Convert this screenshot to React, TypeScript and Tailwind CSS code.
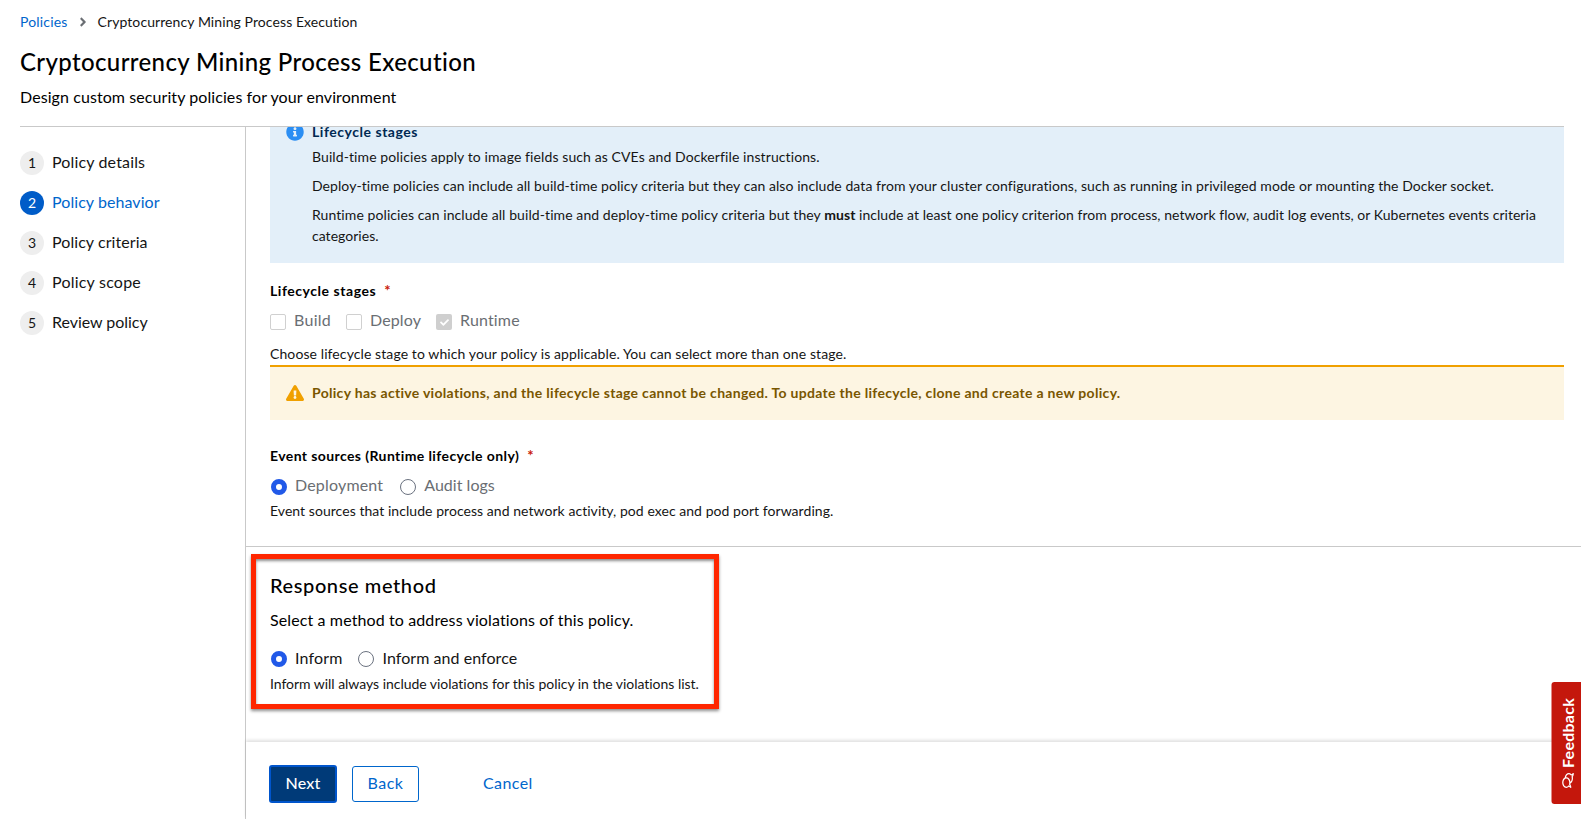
import type { ReactNode } from "react";
import { FaAngleRight, FaCheck, FaExclamationTriangle, FaInfoCircle, FaRegComments } from "react-icons/fa";

const steps = [
  { label: "Policy details", tracking: "tracking-[0.15px]" },
  { label: "Policy behavior", tracking: "tracking-[0.069px]" },
  { label: "Policy criteria", tracking: "tracking-[0.072px]" },
  { label: "Policy scope", tracking: "tracking-[0.22px]" },
  { label: "Review policy", tracking: "tracking-[-0.034px]" },
];

function FieldLabel({ children, className }: { children: ReactNode; className: string }) {
  return (
    <div className="flex h-[21px] gap-2 text-sm leading-[21px] font-bold text-black">
      <span className={className}>{children}</span>
      <span className="text-[15px] font-bold text-[#c9190b]">*</span>
    </div>
  );
}

function Checkbox({ label, checked, className }: { label: string; checked?: boolean; className: string }) {
  return (
    <label className="flex items-start text-base leading-6 text-[#6a6e73]">
      <span
        className={
          checked
            ? "mt-[6px] mr-2 flex size-4 items-center justify-center rounded-[2px] bg-[#cfcfcf] text-white"
            : "mt-[6px] mr-2 size-4 rounded-[2px] border border-[#d0d0d0] bg-white"
        }
      >
        {checked && <FaCheck className="size-[9px]" />}
      </span>
      <span className={className}>{label}</span>
    </label>
  );
}

function Radio({ label, checked, muted, className }: { label: string; checked?: boolean; muted?: boolean; className: string }) {
  return (
    <label
      className={
        muted
          ? "flex items-start pt-px text-base leading-6 text-[#6a6e73]"
          : "flex items-start text-base leading-6 text-[#151515]"
      }
    >
      <span
        className={
          checked
            ? "mt-[5px] mr-2 size-4 rounded-full border-[5px] border-[#2159e8] bg-white"
            : "mt-[5px] mr-2 size-4 rounded-full border border-[#6b7280] bg-white"
        }
      />
      <span className={muted ? `-mt-px ${className}` : className}>{label}</span>
    </label>
  );
}

export default function App() {
  return (
    <div className="relative flex h-[819px] w-full flex-col overflow-hidden bg-white font-['Lato',sans-serif] text-[#151515]">
      <header className="mr-[17px] ml-5 h-[127px] shrink-0 border-b border-[#c9c9c9] pt-[11px]">
        <nav className="flex h-[21px] items-center text-sm leading-[21px]">
          <a className="tracking-[0.18px] text-[#0066cc]">Policies</a>
          <FaAngleRight className="mr-[8px] ml-[8px] size-[14px] text-[#6a6e73]" />
          <span className="tracking-[0.085px]">Cryptocurrency Mining Process Execution</span>
        </nav>
        <h1 className="mt-[14px] h-[31px] text-2xl leading-[31px] font-medium tracking-[0.371px] text-black">Cryptocurrency Mining Process Execution</h1>
        <p className="mt-2 text-base leading-6 tracking-[0.08px] text-black">Design custom security policies for your environment</p>
      </header>

      <div className="flex min-h-0 flex-1">
        <ol className="flex w-[246px] shrink-0 flex-col gap-4 border-r border-[#c9c9c9] pt-6 pl-5">
          {steps.map((s, i) => (
            <li key={s.label} className={i === 1 ? "flex h-6 gap-2 text-[#0066cc]" : "flex h-6 gap-2"}>
              <span
                className={
                  i === 1
                    ? "flex size-6 justify-center rounded-full bg-[#005cc8] text-sm leading-6 text-white"
                    : "flex size-6 justify-center rounded-full bg-[#eeeeee] text-sm leading-6"
                }
              >
                {i + 1}
              </span>
              <span className={`text-base leading-[22px] ${s.tracking}`}>{s.label}</span>
            </li>
          ))}
        </ol>

        <div className="flex min-w-0 flex-1 flex-col">
          <main className="h-[615px] shrink-0 overflow-hidden">
            <section className="flow-root h-[419px] pr-[17px] pl-6">
              <div className="-mt-[24px] flex h-[160px] gap-2 border-t-2 border-[#2b9af3] bg-[#e3eff9] p-4 text-sm leading-[21px]">
                <FaInfoCircle className="mt-[2px] size-[18px] shrink-0 text-[#2b8ef3]" />
                <div>
                  <h4 className="font-bold tracking-[0.53px] text-[#002952]">Lifecycle stages</h4>
                  <div className="mt-1 flex flex-col gap-2">
                    <p className="tracking-[0.097px]">Build-time policies apply to image fields such as CVEs and Dockerfile instructions.</p>
                    <p className="tracking-[0.068px]">
                      Deploy-time policies can include all build-time policy criteria but they can also include data from your cluster configurations,
                      such as running in privileged mode or mounting the Docker socket.
                    </p>
                    <p className="tracking-[0.034px]">
                      <span className="tracking-[0.085px]">
                        Runtime policies can include all build-time and deploy-time policy criteria but they{" "}
                      </span>
                      <b className="font-bold">must</b> include at
                      least one policy criterion from process, network flow, audit log events, or Kubernetes events criteria categories.
                    </p>
                  </div>
                </div>
              </div>

              <div className="mt-[17px]">
                <FieldLabel className="tracking-[0.54px]">Lifecycle stages</FieldLabel>
                <div className="mt-[7px] flex h-6 gap-[15px]">
                  <Checkbox label="Build" className="tracking-[0.266px]" />
                  <Checkbox label="Deploy" className="tracking-[0.115px]" />
                  <Checkbox label="Runtime" checked className="tracking-[0.158px]" />
                </div>
                <p className="mt-[11px] mb-px h-[21px] text-sm leading-[21px] tracking-[0.095px]">
                  Choose lifecycle stage to which your policy is applicable. You can select more than one stage.
                </p>
              </div>

              <div className="flex h-[55px] gap-2 border-t-2 border-[#f0a000] bg-[#fdf5e2] px-4 pt-[15px] text-sm leading-[21px]">
                <FaExclamationTriangle className="mt-[2px] size-[18px] shrink-0 text-[#f0a000]" />
                <p className="font-bold tracking-[0.302px] text-[#795600]">
                  Policy has active violations, and the lifecycle stage cannot be changed. To update the lifecycle, clone and create a new policy.
                </p>
              </div>

              <div className="mt-[25px]">
                <FieldLabel className="tracking-[0.4px]">Event sources (Runtime lifecycle only)</FieldLabel>
                <div className="mt-[7px] flex h-6 gap-[17px] pl-px">
                  <Radio label="Deployment" checked muted className="tracking-[0.18px]" />
                  <Radio label="Audit logs" muted className="tracking-[0.02px]" />
                </div>
                <p className="mt-[3px] h-[21px] text-sm leading-[21px] tracking-[0.05px]">
                  Event sources that include process and network activity, pod exec and pod port forwarding.
                </p>
              </div>
            </section>

            <section className="border-t border-[#c9c9c9] pl-6">
              <h2 className="mt-[25px] h-[26px] text-xl leading-[26px] font-medium tracking-[0.6px] text-black">Response method</h2>
              <p className="mt-[10px] h-6 text-base leading-6 tracking-[0.115px] text-black">Select a method to address violations of this policy.</p>
              <div className="mt-[14px] flex h-6 gap-4 pl-px">
                <Radio label="Inform" checked className="tracking-[0.15px]" />
                <Radio label="Inform and enforce" className="tracking-[0.06px]" />
              </div>
              <p className="mt-[3px] h-[21px] text-sm leading-[21px] tracking-[-0.034px]">
                Inform will always include violations for this policy in the violations list.
              </p>
            </section>
          </main>

          <footer className="flex flex-1 items-start bg-white pt-[23px] pl-[23px] text-base leading-6 shadow-[0_-2px_3px_rgba(3,3,3,0.12)]">
            <button className="h-[38px] w-[68px] rounded-[3px] border-2 border-[#0055cc] bg-[#003a78] pb-[2px] font-medium tracking-[0.196px] text-white">Next</button>
            <button className="mt-px ml-[15px] h-9 w-[67px] rounded-[3px] border border-[#0066cc] bg-white pb-[2px] tracking-[0.516px] text-[#0066cc]">Back</button>
            <button className="mt-px ml-16 h-9 pb-[2px] tracking-[0.4px] text-[#0066cc]">Cancel</button>
          </footer>
        </div>
      </div>

      <div className="absolute top-[554px] left-[251px] h-[155px] w-[468px] border-[5px] border-[#ff2600] shadow-[0_2px_3px_rgba(0,0,0,0.45),inset_0_2px_3px_rgba(0,0,0,0.45)]" />

      <button className="absolute top-[682px] right-0 flex h-[122px] w-[29.5px] rotate-180 items-center justify-center gap-[5px] rounded-r-[3px] bg-[#c4170c] pr-[3px] text-base leading-[24px] font-bold tracking-[0.254px] text-white [writing-mode:vertical-rl]">
        <FaRegComments className="size-[15px] rotate-90" />
        <span>Feedback</span>
      </button>
    </div>
  );
}
